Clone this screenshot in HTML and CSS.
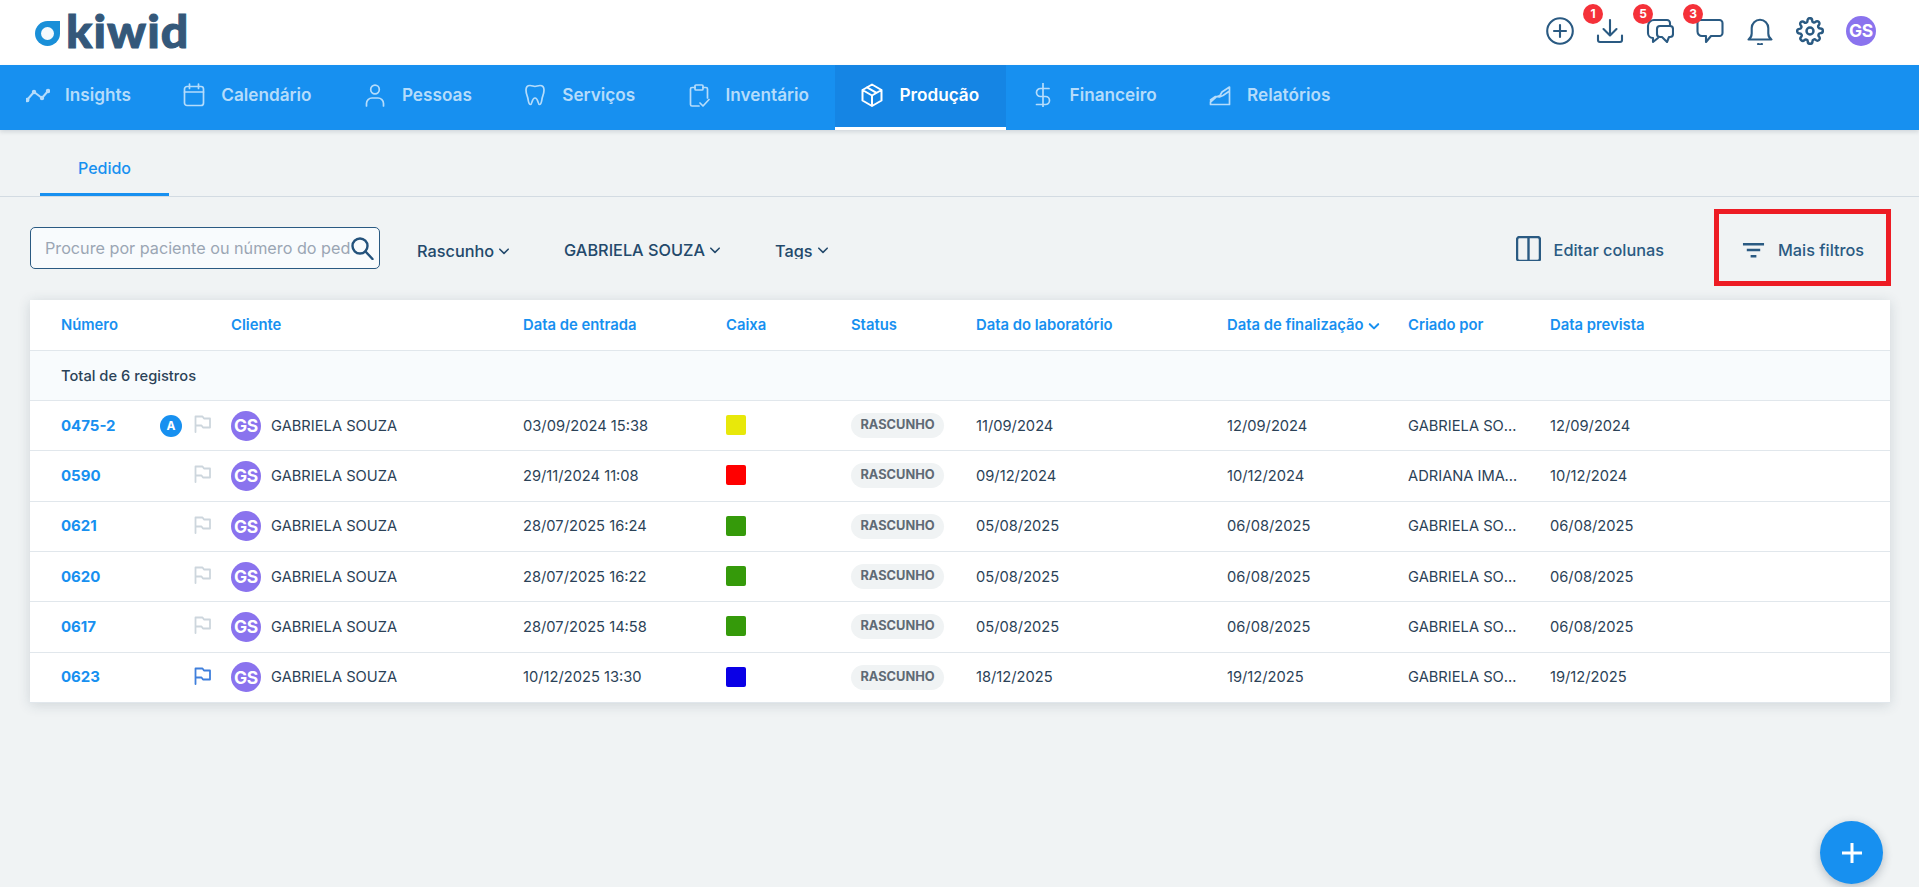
FILE: index.html
```html
<!DOCTYPE html>
<html lang="pt-BR">
<head>
<meta charset="utf-8">
<title>Kiwid - Produção</title>
<link rel="stylesheet" href="styles.css">
</head>
<body>
<header class="topbar">
  <a class="logo">
    <svg class="logo-drop" viewBox="0 0 25 25"><path d="M12.5 0H25V12.5A12.5 12.5 0 1 1 12.5 0Z" fill="#1a8fd8"/><circle cx="12.5" cy="12.5" r="6.5" fill="#f4f9fd"/></svg>
    <span class="logo-word">kiwid</span>
  </a>
  <div class="actions">
    <span class="action"><svg class="ic28" viewBox="0 0 28 28"><circle cx="14" cy="14" r="12.8"/><path d="M14 8v12M8 14h12"/></svg></span>
    <span class="action"><span class="badge">1</span><svg class="ic28" viewBox="0 0 28 28"><path d="M14 3v15M7.5 12l6.500 6.500 6.500-6.500M2 18.500v4.500a2 2 0 0 0 2 2h20a2 2 0 0 0 2-2v-4.500"/></svg></span>
    <span class="action"><span class="badge">5</span><svg class="ic28" viewBox="0 0 28 28"><path d="M24 9V6a3 3 0 0 0-3-3H8a6 6 0 0 0-6 6v7a5 5 0 0 0 5 5v4l5-4"/><path d="M14 9h10a3 3 0 0 1 3 3v5a3 3 0 0 1-3 3h-1l-2 5-5-5h-2a3 3 0 0 1-3-3v-5a3 3 0 0 1 3-3Z"/></svg></span>
    <span class="action"><span class="badge">3</span><svg class="ic28" viewBox="0 0 28 28"><path d="M4.500 3h19a3 3 0 0 1 3 3v10a3 3 0 0 1-3 3H15l-5 6v-6H6a4.500 4.500 0 0 1-4.500-4.500V6a3 3 0 0 1 3-3Z"/></svg></span>
    <span class="action"><svg class="ic28" viewBox="0 0 28 28"><path d="M2.500 22.500c2.200-1.500 3.200-3 3.200-6V11a8.300 8.300 0 0 1 16.600 0v5.500c0 3 1 4.500 3.200 6ZM12 27c1.300.7 2.700.7 4 0"/></svg></span>
    <span class="action"><svg class="ic28" viewBox="0 0 24 24"><circle cx="12" cy="12" r="3"/><path d="M19.400 15a1.650 1.650 0 0 0 .33 1.820l.06.06a2 2 0 1 1-2.830 2.830l-.06-.06a1.650 1.650 0 0 0-2.800 1.170V21a2 2 0 1 1-4 0v-.09a1.650 1.650 0 0 0-2.800-1.120l-.06.06a2 2 0 1 1-2.830-2.830l.06-.06a1.650 1.650 0 0 0-1.170-2.800H3a2 2 0 1 1 0-4h.09a1.650 1.650 0 0 0 1.120-2.800l-.06-.06a2 2 0 1 1 2.830-2.830l.06.06a1.650 1.650 0 0 0 2.800-1.170V3a2 2 0 1 1 4 0v.09a1.650 1.650 0 0 0 2.800 1.120l.06-.06a2 2 0 1 1 2.830 2.830l-.06.06a1.650 1.650 0 0 0 1.170 2.800H21a2 2 0 1 1 0 4h-.09a1.650 1.650 0 0 0-1.510 1Z"/></svg></span>
    <span class="avatar avatar-top">GS</span>
  </div>
</header>

<nav class="mainnav">
  <a class="navitem"><svg class="navicon icon-insights" viewBox="0 0 24 24"><path d="M1 17 8 9l8 6 6-7"/><circle cx="1.300" cy="17" r="1.200" class="dot"/><circle cx="8" cy="9" r="1.200" class="dot"/><circle cx="16" cy="15" r="1.200" class="dot"/><circle cx="22" cy="8" r="1.200" class="dot"/></svg>Insights</a>
  <a class="navitem"><svg class="navicon" viewBox="0 0 24 24"><rect x="2.500" y="3.500" width="19" height="19" rx="2.500"/><path d="M2.500 9h19M7.500 1v4.500M16.500 1v4.500"/></svg>Calendário</a>
  <a class="navitem"><svg class="navicon" viewBox="0 0 24 24"><circle cx="12" cy="6.500" r="4.300"/><path d="M3.500 23v-2.500a5.500 5.500 0 0 1 5.500-5.500h6a5.500 5.500 0 0 1 5.500 5.500V23"/></svg>Pessoas</a>
  <a class="navitem"><svg class="navicon" viewBox="0 0 24 24"><path d="M7 2.500c2 0 3.500 1 5 1s3-1 5-1c2.800 0 4 2 4 4.500 0 4-1.500 6-2 9-.4 2.500-.8 5.500-2.500 5.500s-1.300-6.500-4.500-6.500S9.200 21.500 7.500 21.500 5.400 18.500 5 16c-.5-3-2-5-2-9 0-2.500 1.200-4.500 4-4.500Z"/></svg>Serviços</a>
  <a class="navitem"><svg class="navicon" viewBox="0 0 24 24"><path d="M8 4.500H5a1.500 1.500 0 0 0-1.500 1.500v15.500A1.500 1.500 0 0 0 5 23h7M16 4.500h3A1.500 1.500 0 0 1 20.500 6v9"/><rect x="8" y="2" width="8" height="5" rx="1" class="tab-top"/><path d="m13 20 3 3 6-6.500"/></svg>Inventário</a>
  <a class="navitem active"><svg class="navicon" viewBox="0 0 24 24"><path d="M12 1.500 21.500 7v10.500L12 23l-9.500-5.500V7ZM2.500 7l9.500 5.500L21.500 7M12 12.500V23M7 4.300l9.500 5.500"/></svg>Produção</a>
  <a class="navitem"><svg class="navicon" viewBox="0 0 24 24"><path d="M12 0v24M18 5.500H9.500a4 4 0 0 0 0 8h5a4 4 0 0 1 0 8H5.500"/></svg>Financeiro</a>
  <a class="navitem"><svg class="navicon" viewBox="0 0 24 24"><path d="M2.500 21.500h19V4L14 9l-2 3.500-4 1.500-5.500 5ZM2.500 17l5-3.500 4 .5 3.500-1.500 6.500-4.500"/></svg>Relatórios</a>
</nav>

<div class="tabs"><a class="tab">Pedido</a></div>

<section class="filters">
  <label class="search">
    <input class="search-input" placeholder="Procure por paciente ou número do pedido">
    <svg class="search-icon" viewBox="0 0 24 24"><circle cx="10" cy="10" r="7.500"/><path d="m15.500 15.500 7 7.500"/></svg>
  </label>
  <a class="filter f-status">Rascunho<svg class="chev" viewBox="0 0 10 10"><path d="m1.500 3.500 3.500 3.500 3.500-3.500"/></svg></a>
  <a class="filter f-user">GABRIELA SOUZA<svg class="chev" viewBox="0 0 10 10"><path d="m1.500 3.500 3.500 3.500 3.500-3.500"/></svg></a>
  <a class="filter f-tags"><span class="clip">Tags</span><svg class="chev" viewBox="0 0 10 10"><path d="m1.500 3.500 3.500 3.500 3.500-3.500"/></svg></a>
  <a class="tool tool-cols"><svg class="tool-icon" viewBox="0 0 24 24"><rect x="1" y="1" width="22" height="23" rx="2.500"/><path d="M12 1v23"/></svg>Editar colunas</a>
  <a class="tool tool-more"><svg class="tool-filter" viewBox="0 0 24 16"><path d="M1 2h22M5 8h14M9 14.500h6"/></svg>Mais filtros<span class="highlight"></span></a>
</section>

<main class="card">
  <table class="grid">
    <colgroup>
      <col class="c-num"><col class="c-badge"><col class="c-flag"><col class="c-client"><col class="c-in"><col class="c-box"><col class="c-status"><col class="c-lab"><col class="c-end"><col class="c-by"><col class="c-due">
    </colgroup>
    <thead>
      <tr>
        <th class="first">Número</th><th></th><th></th><th>Cliente</th><th>Data de entrada</th><th>Caixa</th><th>Status</th><th>Data do laboratório</th>
        <th>Data de finalização<svg class="chev chev-blue" viewBox="0 0 10 10"><path d="m1.500 3.500 3.500 3.500 3.500-3.500"/></svg></th>
        <th>Criado por</th><th>Data prevista</th>
      </tr>
    </thead>
    <tbody>
      <tr class="total"><td colspan="11">Total de 6 registros</td></tr>
      <tr>
        <td class="first num">0475-2</td><td><span class="letter">A</span></td><td><svg class="flag" viewBox="0 0 17 18"><path d="M1.500 17V1.500h7l1.500 2h6v9H9l-1.500-2h-6"/></svg></td>
        <td><div class="client"><span class="avatar">GS</span>GABRIELA SOUZA</div></td><td>03/09/2024 15:38</td><td><span class="swatch yellow"></span></td><td><span class="pill">RASCUNHO</span></td><td>11/09/2024</td><td>12/09/2024</td><td><span class="trunc">GABRIELA SOUZA</span></td><td>12/09/2024</td>
      </tr>
      <tr>
        <td class="first num">0590</td><td></td><td><svg class="flag" viewBox="0 0 17 18"><path d="M1.500 17V1.500h7l1.500 2h6v9H9l-1.500-2h-6"/></svg></td>
        <td><div class="client"><span class="avatar">GS</span>GABRIELA SOUZA</div></td><td>29/11/2024 11:08</td><td><span class="swatch red"></span></td><td><span class="pill">RASCUNHO</span></td><td>09/12/2024</td><td>10/12/2024</td><td><span class="trunc">ADRIANA IMAGEM</span></td><td>10/12/2024</td>
      </tr>
      <tr>
        <td class="first num">0621</td><td></td><td><svg class="flag" viewBox="0 0 17 18"><path d="M1.500 17V1.500h7l1.500 2h6v9H9l-1.500-2h-6"/></svg></td>
        <td><div class="client"><span class="avatar">GS</span>GABRIELA SOUZA</div></td><td>28/07/2025 16:24</td><td><span class="swatch green"></span></td><td><span class="pill">RASCUNHO</span></td><td>05/08/2025</td><td>06/08/2025</td><td><span class="trunc">GABRIELA SOUZA</span></td><td>06/08/2025</td>
      </tr>
      <tr>
        <td class="first num">0620</td><td></td><td><svg class="flag" viewBox="0 0 17 18"><path d="M1.500 17V1.500h7l1.500 2h6v9H9l-1.500-2h-6"/></svg></td>
        <td><div class="client"><span class="avatar">GS</span>GABRIELA SOUZA</div></td><td>28/07/2025 16:22</td><td><span class="swatch green"></span></td><td><span class="pill">RASCUNHO</span></td><td>05/08/2025</td><td>06/08/2025</td><td><span class="trunc">GABRIELA SOUZA</span></td><td>06/08/2025</td>
      </tr>
      <tr>
        <td class="first num">0617</td><td></td><td><svg class="flag" viewBox="0 0 17 18"><path d="M1.500 17V1.500h7l1.500 2h6v9H9l-1.500-2h-6"/></svg></td>
        <td><div class="client"><span class="avatar">GS</span>GABRIELA SOUZA</div></td><td>28/07/2025 14:58</td><td><span class="swatch green"></span></td><td><span class="pill">RASCUNHO</span></td><td>05/08/2025</td><td>06/08/2025</td><td><span class="trunc">GABRIELA SOUZA</span></td><td>06/08/2025</td>
      </tr>
      <tr>
        <td class="first num">0623</td><td></td><td><svg class="flag flag-on" viewBox="0 0 17 18"><path d="M1.500 17V1.500h7l1.500 2h6v9H9l-1.500-2h-6"/></svg></td>
        <td><div class="client"><span class="avatar">GS</span>GABRIELA SOUZA</div></td><td>10/12/2025 13:30</td><td><span class="swatch blue"></span></td><td><span class="pill">RASCUNHO</span></td><td>18/12/2025</td><td>19/12/2025</td><td><span class="trunc">GABRIELA SOUZA</span></td><td>19/12/2025</td>
      </tr>
    </tbody>
  </table>
</main>

<button class="fab" aria-label="Adicionar"><svg viewBox="0 0 20 20"><path d="M10 0v20M0 10h20"/></svg></button>
</body>
</html>
```

FILE: styles.css
```css
* { box-sizing: border-box; }
html, body { margin: 0; height: 100%; }
body {
  background: #f0f3f4;
  font-family: Inter, "Liberation Sans", sans-serif;
  color: #2b4257;
  overflow: hidden;
}
svg { fill: none; stroke: currentColor; stroke-linecap: round; stroke-linejoin: round; flex: none; }

/* top bar */
.topbar { height: 65px; background: #fff; display: flex; align-items: center; justify-content: space-between; padding: 0 43px 4px 35px; }
.logo { display: flex; align-items: flex-end; gap: 6px; height: 31px; }
.logo-drop { width: 25px; height: 25px; stroke: none; }
.logo-word { display: block; font-family: Lato, sans-serif; font-weight: 900; font-size: 46px; line-height: 31px; height: 31px; letter-spacing: 1px; color: #34587a; -webkit-text-stroke: 1px #34587a; transform: scaleX(1.05); transform-origin: left center; }
.actions { display: flex; align-items: center; }
.action { position: relative; width: 50px; display: flex; justify-content: center; color: #2a5a82; }
.ic28 { width: 28px; height: 28px; stroke-width: 2.1; }
.badge { position: absolute; left: -2px; top: -13px; width: 20px; height: 20px; border-radius: 50%; background: #f53139; color: #fff; font-size: 12px; font-weight: 700; line-height: 20px; text-align: center; }
.avatar { display: inline-flex; align-items: center; justify-content: center; width: 30px; height: 30px; border-radius: 50%; background: #8a73ee; color: #fff; font-size: 17.500px; font-weight: 700; letter-spacing: -.3px; flex: none; }
.avatar-top { margin-left: 11px; }

/* main nav */
.mainnav { height: 65px; background: #1790f0; display: flex; padding-left: 1px; box-shadow: 0 2px 4px rgba(40, 60, 80, .15); position: relative; }
.navitem { display: flex; align-items: center; gap: 15px; padding: 0 26.400px 3px 25px; font-size: 17.200px; font-weight: 600; color: #b5dcfb; border-bottom: 3px solid transparent; }
.navicon { width: 24px; height: 24px; stroke-width: 1.700; }
.icon-insights { stroke-width: 2; }
.icon-insights .dot { fill: currentColor; }
.navitem.active { background: #1585e4; color: #fff; border-bottom-color: #fff; }
.navitem.active .navicon { stroke-width: 2; }

/* tabs */
.tabs { height: 67px; border-bottom: 1px solid #d3dbe2; padding-left: 40px; display: flex; }
.tab { width: 129px; height: 66px; display: flex; align-items: center; justify-content: center; padding-top: 13px; font-size: 16px; font-weight: 500; color: #1790f0; border-bottom: 3px solid #1790f0; }

/* filters */
.filters { display: flex; align-items: center; height: 42px; margin-top: 30px; padding: 0 28px 0 30px; }
.search { width: 350px; height: 42px; border: 1px solid #2a5a82; border-radius: 5px; background: #f8fbfd; display: flex; align-items: center; padding-left: 14px; padding-right: 5px; }
.search-input { flex: 1; min-width: 0; width: 0; border: 0; outline: 0; background: none; padding: 0; font: 400 16.200px Inter, sans-serif; }
.search-input::placeholder { color: #9ba6b4; opacity: 1; }
.search-icon { width: 24px; height: 24px; stroke-width: 2.400; color: #23527c; }
.filter { display: flex; align-items: center; gap: 4px; font-size: 16.300px; font-weight: 500; color: #23496b; }
.f-status { margin-left: 37px; padding-top: 5px; }
.f-user { margin-left: 54px; padding-top: 3px; }
.f-tags { margin-left: 54px; padding-top: 3px; }
.clip { display: block; height: 18px; line-height: 20px; overflow: hidden; }
.chev { width: 12px; height: 12px; stroke-width: 1.300; }
.tool { display: flex; align-items: center; font-size: 16.300px; font-weight: 500; color: #2a5a82; }
.tool-cols { margin-left: auto; gap: 13px; padding-top: 4px; }
.tool-icon { width: 25px; height: 25px; stroke-width: 2.300; margin-top: -3px; }
.tool-more { position: relative; width: 177px; height: 77px; margin: -1px 0 0 50px; padding-left: 28px; padding-top: 4px; gap: 13px; }
.tool-filter { width: 23px; height: 16px; stroke-width: 2.400; stroke-linecap: butt; }
.highlight { position: absolute; inset: 0; border: 5px solid #ed1c24; pointer-events: none; }

/* table card */
.card { width: 1860px; margin: 31px 0 0 30px; background: #fff; box-shadow: 0 2px 12px rgba(40, 60, 80, .16); }
.grid { width: 100%; table-layout: fixed; border-collapse: separate; border-spacing: 0; font-size: 14.700px; }
.c-num { width: 125px; } .c-badge { width: 32px; } .c-flag { width: 31px; } .c-client { width: 292px; }
.c-in { width: 203px; } .c-box { width: 125px; } .c-status { width: 125px; } .c-lab { width: 251px; }
.c-end { width: 181px; } .c-by { width: 142px; } .c-due { width: 353px; }
th, td { height: 50.330px; padding: 0 0 0 13px; border-bottom: 1px solid #e1e7ec; text-align: left; white-space: nowrap; color: #2b4257; font-weight: 400; }
th { color: #1790f0; font-weight: 600; font-size: 14.800px; height: 51px; padding-bottom: 1px; }
.first { padding-left: 31px; }
.num { color: #1790f0; font-weight: 700; font-size: 15px; padding-bottom: 1px; }
td:nth-child(2), td:nth-child(3) { padding-left: 5px; }
.total td { background: #f8fbfd; padding-left: 31px; font-size: 14.700px; font-weight: 500; height: 50px; }
.letter { display: block; width: 22px; height: 22px; border-radius: 50%; background: #1790f0; color: #fff; font-size: 12px; font-weight: 700; line-height: 22px; text-align: center; }
.flag { display: block; width: 17px; height: 18px; stroke-width: 1.800; color: #cdd6dd; margin: -3px 0 0 2px; }
.flag-on { color: #3f7fdc; }
.client { display: flex; align-items: center; gap: 10px; }
.swatch { display: block; width: 20px; height: 20px; border-radius: 2px; margin-top: -1px; }
.yellow { background: #e8e80a; } .red { background: #ff0000; } .green { background: #359a0a; } .blue { background: #0a00e6; }
.pill { display: inline-block; width: 93px; height: 25px; border-radius: 13px; background: #f0f3f4; color: #5f6a74; font-size: 12.800px; font-weight: 700; line-height: 24px; text-align: center; }
.trunc { display: block; width: 112px; overflow: hidden; text-overflow: ellipsis; }
.chev-blue { color: #1790f0; margin-left: 4px; vertical-align: -2px; stroke-width: 1.700; }

/* floating button */
.fab { position: fixed; left: 1820px; top: 821px; width: 63px; height: 63px; border: 0; border-radius: 50%; background: #1790f0; box-shadow: 0 3px 10px rgba(40, 60, 80, .3); color: #fff; display: flex; align-items: center; justify-content: center; padding: 0; }
.fab svg { width: 20px; height: 20px; stroke-width: 3; stroke-linecap: butt; }
```
